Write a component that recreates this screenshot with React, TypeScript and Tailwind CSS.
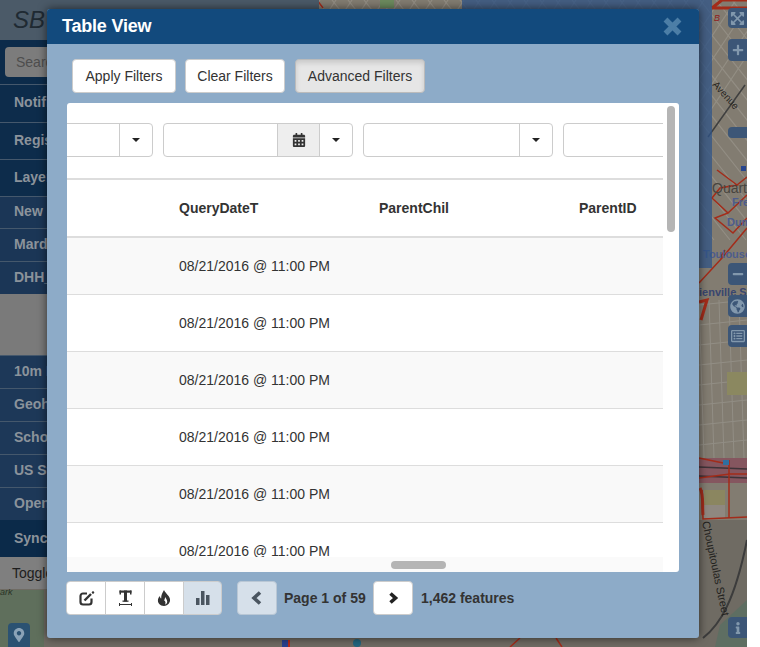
import {
  FaCalendarAlt,
  FaExpandArrowsAlt,
  FaGlobeAmericas,
  FaInfo,
  FaMapMarkerAlt,
  FaMinus,
  FaPlus,
  FaRegListAlt,
} from "react-icons/fa";

const topRows = [
  { label: "Notifications", h: "h-[38px]", bg: "bg-[#0d2c4b]" },
  { label: "Registry", h: "h-[37px]", bg: "bg-[#0d2c4b]" },
  { label: "Layers", h: "h-[37px]", bg: "bg-[#0d2c4b]" },
  { label: "New Layer", h: "h-[32px]", bg: "bg-[#1b3656]" },
  { label: "Mardi Gras", h: "h-[33px]", bg: "bg-[#1b3656]" },
  { label: "DHH_Clinics", h: "h-[33px]", bg: "bg-[#1b3656]" },
];

const lowerRows = ["10m Parcels", "Geohash", "Schools", "US States", "OpenStreetMap"];

function MapDrawing() {
  const streets = [];
  for (let i = 0; i < 30; i++) {
    // diagonal blocks in the upper part of the map
    streets.push(<path key={`a${i}`} d={`M${300 + i * 16} 0L${300 + i * 16 + 190} 240`} />);
    streets.push(<path key={`b${i}`} d={`M${320 + i * 16} 0L${320 + i * 16 - 200} 300`} />);
  }
  const blocks = [];
  for (let i = 0; i < 8; i++) {
    blocks.push(<path key={`c${i}`} d={`M${699 + i * 10} 300L${704 + i * 10} 458`} />);
    blocks.push(<path key={`d${i}`} d={`M699 ${305 + i * 20}L747 ${300 + i * 20}`} />);
  }
  return (
    <svg className="absolute inset-0 h-full w-full" viewBox="0 0 747 647">
      <rect width="747" height="647" fill="#827c71" />
      <rect y="520" width="747" height="127" fill="#6f6b63" />
      <rect y="590" width="44" height="57" fill="#5f6f5c" />
      <path d="M720 625L747 600V647H715Z" fill="#5e6e62" />
      <g stroke="#938e84" strokeWidth="1.2" fill="none">
        {streets}
      </g>
      <g stroke="#928e85" strokeWidth="1" fill="none">
        {blocks}
      </g>
      <rect x="380" y="0" width="14" height="8" fill="#6c8a5e" />
      <path d="M727 372H747V395H727Z" fill="#8b8860" />
      <path d="M699 458H747V483H699Z" fill="#85565f" />
      <path d="M699 467L747 469M699 476L747 478" stroke="#3e3338" strokeWidth="1.5" />
      <path d="M704 490H725V505H704Z" fill="#8b8660" />
      <path d="M704 505H725V518H704Z" fill="#8f8880" />
      <path d="M745 85L708 137" stroke="#3f3f3f" strokeWidth="1.5" fill="none" />
      <path d="M703 638C720 625 735 600 747 540" stroke="#3c3c3c" strokeWidth="2" fill="none" />
      <g stroke="#a32c1a" strokeWidth="1.5" fill="none">
        <path d="M717 170L737 185L720 188L712 198L728 213L715 218L733 233L747 218M737 185L747 177M728 213L747 195" />
        <path d="M699 283L722 258L747 228M725 250L720 258" />
        <path d="M699 302L707 300L701 320" strokeWidth="3" />
        <path d="M699 458L728 464M699 478L730 474H747M702 490L703 519L747 517M729 460V518" />
        <path d="M700 488C704 495 702 505 703 515" strokeWidth="3" />
        <path d="M712 8L722 0H747M712 8H747" strokeWidth="3" />
        <path d="M317 0L323 8M510 647L520 638M556 638L562 647" />
      </g>
      <g fontFamily="'Liberation Sans', sans-serif">
        <text x="712" y="193" fontSize="14" fill="#48453f">Quart</text>
        <text x="732" y="206" fontSize="11" fontWeight="700" fill="#4d5c8c">Fre</text>
        <text x="727" y="226" fontSize="11" fontWeight="700" fill="#4d5c8c">Dum</text>
        <text x="703" y="258" fontSize="11" fontWeight="700" fill="#4d5c8c">Toulouse</text>
        <text x="699" y="296" fontSize="11" fontWeight="700" fill="#39466f">ienville St</text>
        <text x="712" y="85" fontSize="10" fill="#26241f" transform="rotate(48 712 85)">Avenue</text>
        <text x="702" y="522" fontSize="11" fill="#24231f" transform="rotate(78 702 522)">Choupitoulas Street</text>
        <text x="714" y="21" fontSize="9" fontStyle="italic" fill="#8f2020">B</text>
        <text x="0" y="595" fontSize="9" fontStyle="italic" fill="#2a3326">ark</text>
      </g>
      <rect x="741" y="166" width="5" height="5" fill="#28468f" />
      <rect x="723" y="460" width="6" height="5" fill="#2f6fa0" />
      <rect x="282" y="640" width="6" height="7" fill="#27408f" />
      <rect x="288" y="640" width="2" height="7" fill="#b12a1a" />
      <circle cx="357" cy="643" r="4" fill="#22657f" />
    </svg>
  );
}

function Sidebar() {
  return (
    <div className="relative flex h-[647px] w-[319px] shrink-0 flex-col text-[14px] font-bold text-[#8b939b]">
      <div className="flex h-[40px] items-center bg-[#4b5a68] pl-[13px] text-[24px] font-normal italic text-[#1f2a33]">
        SB tools
      </div>
      <div className="flex h-[44px] items-center bg-[#0c2b4a] px-[5px]">
        <div className="flex h-[30px] w-full items-center rounded bg-[#7c7c7c] px-[11px] font-normal text-[#4e4e4e]">
          Search
        </div>
      </div>
      {topRows.map((row) => (
        <div key={row.label} className={`flex ${row.h} ${row.bg} items-center border-t border-[#45586c] pb-[2px] pl-[14px]`}>
          {row.label}
        </div>
      ))}
      <div className="h-[61px] bg-[#7a7a7a]" />
      {lowerRows.map((label) => (
        <div key={label} className="flex h-[33px] items-center border-t border-[#45586c] bg-[#1d3858] pb-[2px] pl-[14px]">
          {label}
        </div>
      ))}
      <div className="flex h-[37px] items-center bg-[#0b2a49] pl-[14px]">Synchronize</div>
      <div className="flex h-[32px] items-center bg-[#7f7f7f] pl-[12px] font-normal text-[#1d1d1d]">Toggle all</div>
      <div className="flex flex-1 items-end pl-[8px]">
        <div className="flex h-[24px] w-[22px] items-center justify-center rounded-t bg-[#2b5272] text-[14px] text-[#8ba3b7]">
          <FaMapMarkerAlt />
        </div>
      </div>
    </div>
  );
}

function MapControls() {
  const cls = "flex w-[19px] items-center justify-center rounded-l bg-[#3c5677] text-[#8298ad]";
  return (
    <div className="relative ml-auto flex h-[647px] w-[19px] flex-col items-end pt-[8px] text-[12px]">
      <div className={`${cls} h-[20px] text-[15px]`}><FaExpandArrowsAlt /></div>
      <div className={`${cls} mt-[11px] h-[22px]`}><FaPlus /></div>
      <div className={`${cls} mt-[66px] h-[11px]`} />
      <div className={`${cls} mt-[125px] h-[22px]`}><FaMinus /></div>
      <div className={`${cls} mt-[10px] h-[22px] text-[15px]`}><FaGlobeAmericas /></div>
      <div className={`${cls} mt-[8px] h-[22px] text-[14px]`}><FaRegListAlt /></div>
      <div className={`${cls} mt-[270px] h-[21px]`}><FaInfo /></div>
    </div>
  );
}

function FilterSelect({ w, calendar }: { w: string; calendar?: boolean }) {
  return (
    <div className={`flex h-[34px] ${w} shrink-0 rounded border border-[#ccc] bg-white`}>
      <div className="min-w-0 flex-1" />
      {calendar && (
        <div className="flex w-[42px] items-center justify-center border-l border-[#ccc] bg-[#eee] text-[14px] text-[#333]">
          <FaCalendarAlt />
        </div>
      )}
      <div className="flex w-[33px] items-center justify-center border-l border-[#ccc]">
        <span className="h-0 w-0 border-x-[4px] border-t-[4px] border-x-transparent border-t-[#222]" />
      </div>
    </div>
  );
}

function Row({ striped }: { striped: boolean }) {
  return (
    <div className={`grid h-[57px] shrink-0 grid-cols-[100px_200px_200px_200px] border-b border-[#ddd] ${striped ? "bg-[#f9f9f9]" : "bg-white"}`}>
      <div />
      <div className="flex items-center pl-[12px]">08/21/2016 @ 11:00 PM</div>
    </div>
  );
}

function TablePanel() {
  return (
    <div className="mx-[20px] mt-[10px] flex h-[469px] flex-col rounded-[3px] bg-white">
      <div className="flex min-h-0 flex-1">
        <div className="flex w-[596px] flex-col overflow-hidden">
          <div className="-ml-[10px] flex h-[75px] shrink-0 gap-[10px] pt-[20px]">
            <FilterSelect w="w-[96px]" />
            <FilterSelect w="w-[190px]" calendar />
            <FilterSelect w="w-[190px]" />
            <FilterSelect w="w-[190px]" />
          </div>
          <div className="grid h-[60px] shrink-0 grid-cols-[100px_200px_200px_200px] border-y-2 border-[#ddd] font-bold">
            <div />
            <div className="flex items-center pl-[12px]">QueryDateT</div>
            <div className="flex items-center pl-[12px]">ParentChil</div>
            <div className="flex items-center pl-[12px]">ParentID</div>
          </div>
          {[true, false, true, false, true, false].map((striped, i) => (
            <Row key={i} striped={striped} />
          ))}
        </div>
        <div className="flex w-[16px] justify-center pt-[3px]">
          <div className="h-[126px] w-[8px] rounded bg-[#b5b5b5]" />
        </div>
      </div>
      <div className="flex h-[15px] w-[596px] shrink-0 items-center bg-[#fafafa] pl-[324px]">
        <div className="h-[8px] w-[55px] rounded bg-[#b5b5b5]" />
      </div>
    </div>
  );
}

function EditIcon() {
  return (
    <svg width="17" height="17" viewBox="0 0 17 17" fill="none" stroke="#333" strokeWidth="2.2">
      <path d="M9 3.5H5A2.5 2.5 0 0 0 2.5 6V12A2.5 2.5 0 0 0 5 14.5H11A2.5 2.5 0 0 0 13.5 12V8.5" />
      <path d="M6.5 10.5L13 4" strokeWidth="2.4" />
      <circle cx="15" cy="2.5" r="1.2" fill="#333" stroke="none" />
    </svg>
  );
}

function TextIcon() {
  return (
    <svg width="15" height="17" viewBox="0 0 15 17" fill="#333">
      <rect x="1.5" y="0.5" width="12" height="2.2" />
      <rect x="6" y="0.5" width="3" height="11" />
      <rect x="1.5" y="0.5" width="1.5" height="4" />
      <rect x="12" y="0.5" width="1.5" height="4" />
      <rect x="4.5" y="10.5" width="6" height="1.3" />
      <rect x="1" y="14" width="13" height="1" />
      <rect x="1" y="13" width="1" height="3" />
      <rect x="13" y="13" width="1" height="3" />
    </svg>
  );
}

function FlameIcon() {
  return (
    <svg width="14" height="16" viewBox="0 0 14 16" fill="#333" fillRule="evenodd">
      <path d="M7 0C8 3 12 5 13 9C13.6 12.5 11 15.5 7 16C3 15.8 .4 13 1 9.5C1.3 8 2 7 3 6C3 7.5 3.5 8.3 4.2 8.6C4 5 5.5 2.5 7 0ZM8.5 7C8.8 9 10.5 10 10.2 12C10 13.5 9 14.3 8 14.6C9 13 8.5 11.5 7.2 10.6C7.6 9.2 7.8 8 8.5 7Z" />
    </svg>
  );
}

function Chevron({ points, color }: { points: string; color: string }) {
  return (
    <svg width="14" height="14" viewBox="0 0 14 14" fill="none" stroke={color} strokeWidth="3.6">
      <path d={points} />
    </svg>
  );
}

function Toolbar() {
  const tool = "flex w-[39px] items-center justify-center border-r border-[#ccc] bg-white";
  return (
    <div className="mt-[9px] flex h-[34px] items-center pl-[19px]">
      <div className="flex h-[34px] overflow-hidden rounded border border-[#ccc]">
        <div className={tool}><EditIcon /></div>
        <div className={tool}><TextIcon /></div>
        <div className={tool}><FlameIcon /></div>
        <div className="flex w-[37px] items-center justify-center bg-[#d6e0ea]">
          <svg width="14" height="14" viewBox="0 0 14 14" fill="#4a5560">
            <rect x="0" y="7" width="3.5" height="7" />
            <rect x="5" y="0" width="3.5" height="14" />
            <rect x="10" y="4" width="3.5" height="10" />
          </svg>
        </div>
      </div>
      <div className="ml-[15px] flex h-[34px] w-[40px] items-center justify-center rounded border border-[#b9c7d5] bg-[#d6e0ea]">
        <Chevron points="M10 1.5L4 7L10 12.5" color="#4a5560" />
      </div>
      <span className="ml-[7px] w-[82px] text-[14px] font-bold whitespace-nowrap text-[#333]">Page 1 of 59</span>
      <div className="ml-[7px] flex h-[34px] w-[40px] items-center justify-center rounded border border-[#ccc] bg-white">
        <Chevron points="M4.5 2.5L9.5 7L4.5 11.5" color="#222" />
      </div>
      <span className="ml-[8px] text-[14px] font-bold text-[#333]">1,462 features</span>
    </div>
  );
}

function TableModal() {
  return (
    <div className="absolute top-[9px] left-[47px] h-[629px] w-[652px] rounded-[3px] bg-[#8dabc8] text-[14px] text-[#333] shadow-[0_0_10px_rgba(0,0,0,0.6)]">
      <div className="flex h-[35px] items-center justify-between rounded-t-[3px] bg-[#124a7d] pr-[17px] pl-[15px]">
        <span className="text-[18px] font-bold tracking-[-0.2px] text-white">Table View</span>
        <svg width="19" height="19" viewBox="0 0 19 19" stroke="#4c7ea6" strokeWidth="5.5">
          <path d="M2.5 2.5L16.5 16.5M16.5 2.5L2.5 16.5" />
        </svg>
      </div>
      <div className="flex pt-[15px] pl-[25px]">
        <div className="flex h-[34px] w-[104px] items-center justify-center rounded border border-[#ccc] bg-white">Apply Filters</div>
        <div className="ml-[9px] flex h-[34px] w-[100px] items-center justify-center rounded border border-[#ccc] bg-white">Clear Filters</div>
        <div className="ml-[10px] flex h-[34px] w-[130px] items-center justify-center rounded border border-[#bbb] bg-[#e6e6e6] shadow-[inset_0_3px_5px_rgba(0,0,0,0.125)]">Advanced Filters</div>
      </div>
      <TablePanel />
      <Toolbar />
    </div>
  );
}

export default function App() {
  return (
    <div className="relative h-[647px] w-[760px] overflow-hidden bg-white font-['Liberation_Sans',Arial,sans-serif]">
      <div className="relative flex h-[647px] w-[747px] overflow-hidden">
        <MapDrawing />
        <Sidebar />
        <div className="relative ml-[143px] h-[268px] w-[250px] shrink-0 bg-[#2f5488]/75" />
        <MapControls />
      </div>
      <TableModal />
    </div>
  );
}
